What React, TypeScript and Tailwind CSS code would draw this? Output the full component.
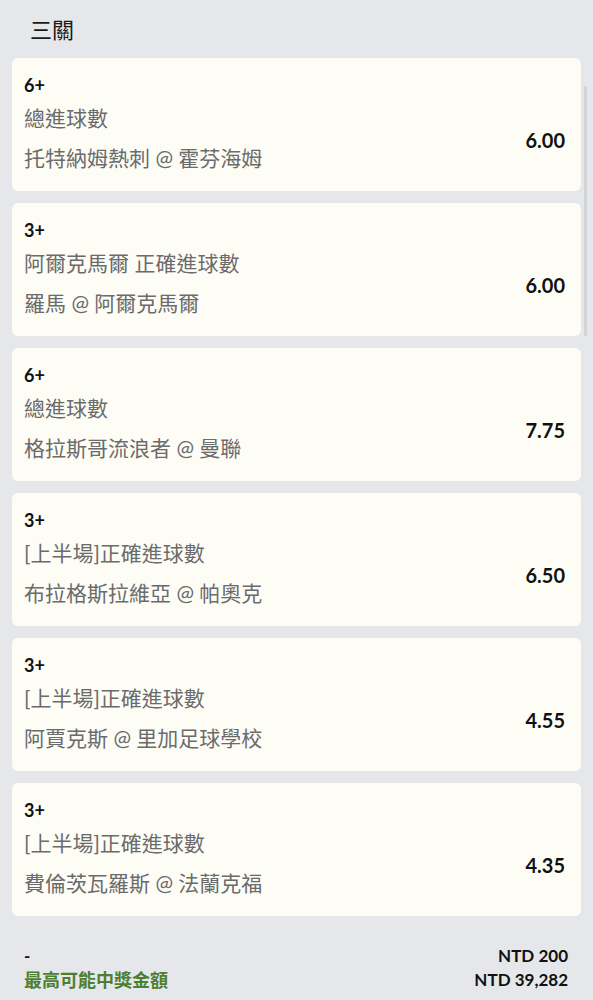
import React from "react";

type Leg = {
  pick: string;
  market: string;
  match: string;
  odds: string;
};

const legs: Leg[] = [
  { pick: "6+", market: "總進球數", match: "托特納姆熱刺 @ 霍芬海姆", odds: "6.00" },
  { pick: "3+", market: "阿爾克馬爾 正確進球數", match: "羅馬 @ 阿爾克馬爾", odds: "6.00" },
  { pick: "6+", market: "總進球數", match: "格拉斯哥流浪者 @ 曼聯", odds: "7.75" },
  { pick: "3+", market: "[上半場]正確進球數", match: "布拉格斯拉維亞 @ 帕奧克", odds: "6.50" },
  { pick: "3+", market: "[上半場]正確進球數", match: "阿賈克斯 @ 里加足球學校", odds: "4.55" },
  { pick: "3+", market: "[上半場]正確進球數", match: "費倫茨瓦羅斯 @ 法蘭克福", odds: "4.35" },
];

const font = "font-['Lato','Noto_Sans_CJK_TC',sans-serif]";

function LegCard({ leg }: { leg: Leg }) {
  return (
    <div className="flex h-[133px] rounded-md bg-[#fdfdf6] pl-3 pr-4">
      <div className="flex flex-1 flex-col pt-4">
        <div className="text-[18px] font-bold leading-[22px] text-[#111]">{leg.pick}</div>
        <div className="mt-2 text-[21px] leading-[28px] text-[#6b6b6b]">{leg.market}</div>
        <div className="mt-3 text-[21px] leading-[28px] text-[#6b6b6b]">{leg.match}</div>
      </div>
      <div className="flex items-center pt-[30px] text-[20px] font-bold text-[#111]">{leg.odds}</div>
    </div>
  );
}

export default function App() {
  return (
    <div className={`relative min-h-[1000px] w-[593px] bg-[#e6e7eb] ${font}`}>
      <div className="flex h-[58px] items-center pl-[30px] text-[22px] text-[#1a1a1a]">三關</div>

      <div className="flex flex-col gap-3 pl-3 pr-3">
        {legs.map((leg, i) => (
          <LegCard key={i} leg={leg} />
        ))}
      </div>

      <div className="mt-7 flex justify-between pl-6 pr-[25px]">
        <div className="flex flex-col">
          <div className="text-[17px] font-bold leading-6 text-[#111]">-</div>
          <div className="text-[18px] font-bold leading-6 text-[#4e7f2f]">最高可能中獎金額</div>
        </div>
        <div className="flex flex-col items-end text-[17px] font-bold leading-6 text-[#111]">
          <div>NTD 200</div>
          <div>NTD 39,282</div>
        </div>
      </div>

      {/* scroll thumb */}
      <div className="absolute left-[584px] top-[86px] h-[250px] w-[3px] rounded-full bg-[#d3d4d8]" />
    </div>
  );
}
